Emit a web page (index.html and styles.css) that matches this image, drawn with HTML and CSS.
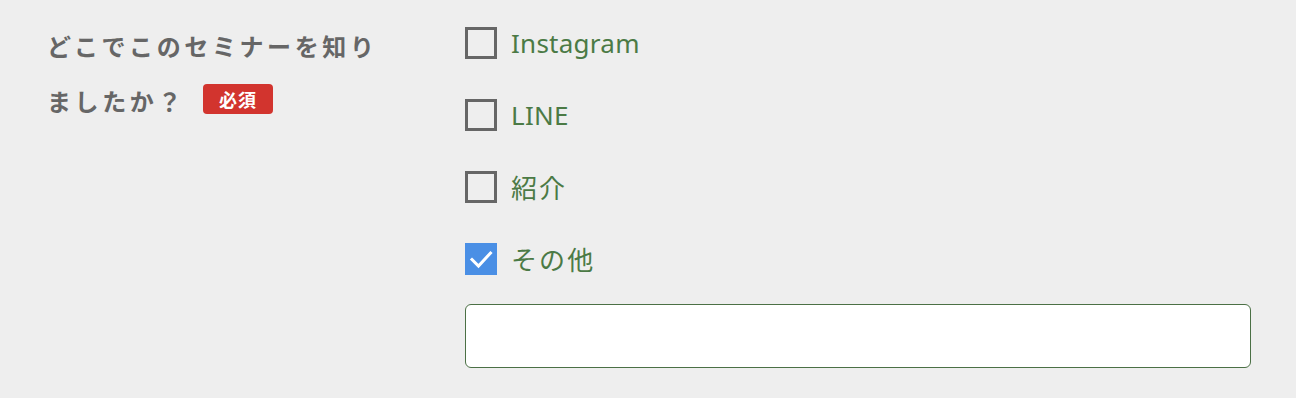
FILE: index.html
```html
<!DOCTYPE html>
<html lang="ja">
<head>
<meta charset="utf-8">
<link rel="stylesheet" href="styles.css">
</head>
<body>
<div class="form-row">
  <div class="field-label">
    <div class="label-line">どこでこのセミナーを知り</div>
    <div class="label-line"><span class="label-text">ましたか？</span><span class="badge">必須</span></div>
  </div>
  <div class="options">
    <label class="option"><span class="box"></span><span class="opt-text">Instagram</span></label>
    <label class="option"><span class="box"></span><span class="opt-text">LINE</span></label>
    <label class="option"><span class="box"></span><span class="opt-text ja">紹介</span></label>
    <label class="option"><span class="box checked"><svg viewBox="0 0 32 32" width="32" height="32"><polyline points="7,16.5 13.5,23 25.5,10" fill="none" stroke="#fff" stroke-width="3" stroke-linecap="square"/></svg></span><span class="opt-text ja">その他</span></label>
    <div class="other-input"></div>
  </div>
</div>
</body>
</html>
```
FILE: styles.css
```css
html, body {
  margin: 0;
  padding: 0;
  background: #eeeeee;
}
body {
  font-family: "Noto Sans CJK JP", "Noto Sans", sans-serif;
}
.form-row {
  display: grid;
  grid-template-columns: 418px 1fr;
  padding: 18px 45px 0 47px;
}
.field-label {
  font-size: 24px;
  font-weight: 700;
  letter-spacing: 0.15em;
  color: #666666;
}
.label-line {
  display: flex;
  align-items: center;
  height: 55px;
  white-space: nowrap;
}
.badge {
  display: inline-block;
  margin-left: 18px;
  margin-top: -3px;
  width: 70px;
  height: 30px;
  line-height: 30px;
  text-align: center;
  background: #d2342e;
  color: #ffffff;
  border-radius: 4px;
  font-size: 18px;
  letter-spacing: 0.06em;
  font-weight: 700;
}
.options {
  display: flex;
  flex-direction: column;
  gap: 40px;
  padding-top: 9px;
}
.option {
  display: flex;
  align-items: center;
  height: 32px;
  gap: 14px;
}
.box {
  width: 32px;
  height: 32px;
  box-sizing: border-box;
  border: 3px solid #666666;
  flex: none;
}
.box.checked {
  border: none;
  background: #4a8fe5;
}
.box svg {
  display: block;
}
.opt-text {
  font-family: "Noto Sans", "Noto Sans CJK JP", sans-serif;
  font-size: 26px;
  color: #4b7a45;
  letter-spacing: 0.01em;
  line-height: 32px;
}
.opt-text.ja {
  font-family: "Noto Sans CJK JP", sans-serif;
  letter-spacing: 0.08em;
}
.other-input {
  margin-top: -11px;
  height: 64px;
  box-sizing: border-box;
  border: 1px solid #4b7045;
  border-radius: 6px;
  background: #ffffff;
}
```
